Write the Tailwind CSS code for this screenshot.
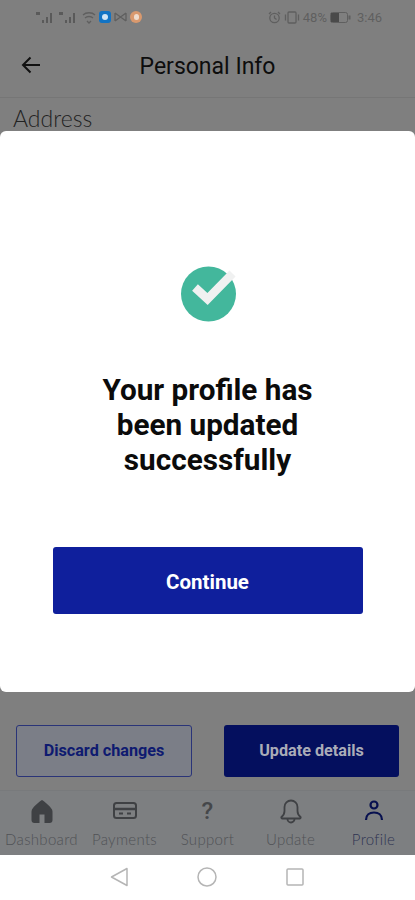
<!DOCTYPE html>
<html>
<head>
<meta charset="utf-8">
<script src="https://cdn.jsdelivr.net/npm/@tailwindcss/browser@4"></script>
</head>
<body class="m-0">
<div class="relative w-[415px] h-[900px] overflow-hidden flex flex-col bg-[#7f7f7f] font-['Roboto',sans-serif]">
  <!-- status bar -->
  <div class="h-[33px] pt-[1px] pl-[36px] pr-[33px] flex items-center justify-between text-[#5f5f5f] shrink-0">
    <div class="flex items-center gap-[3px]">
      <svg width="20" height="13" viewBox="0 0 20 13" fill="#5a5a5a"><rect x="0" y="1" width="4" height="3"/><rect x="6" y="9" width="2" height="3"/><rect x="10" y="6" width="2" height="6"/><rect x="14" y="2" width="2" height="10"/></svg>
      <svg width="20" height="13" viewBox="0 0 20 13" fill="#5a5a5a"><rect x="0" y="1" width="4" height="3"/><rect x="6" y="9" width="2" height="3"/><rect x="10" y="6" width="2" height="6"/><rect x="14" y="2" width="2" height="10"/></svg>
      <svg width="14" height="13" viewBox="0 0 14 13" fill="none" stroke="#5f5f5f" stroke-width="1.3"><path d="M1 4c3-3 9-3 12 0M3 7c2-2 6-2 8 0M5 10l2 2 2-2"/></svg>
      <div class="w-[12px] h-[12px] rounded-[3px] bg-[#1173c4] flex items-center justify-center"><div class="w-[6px] h-[6px] rounded-full bg-[#cfe4f5]"></div></div>
      <svg width="13" height="10" viewBox="0 0 13 10" fill="none" stroke="#5f5f5f" stroke-width="1.3"><path d="M1 1l11 8M12 1L1 9M1 1v8M12 1v8"/></svg>
      <div class="w-[12px] h-[12px] rounded-full bg-[#d9996e] flex items-center justify-center"><div class="w-[5px] h-[6px] rounded-full bg-[#efdccd]"></div></div>
    </div>
    <div class="flex items-center gap-[3px] text-[13px] leading-none">
      <svg width="13" height="13" viewBox="0 0 13 13" fill="none" stroke="#5f5f5f" stroke-width="1.3"><circle cx="6.5" cy="7" r="4.7"/><path d="M6.5 4.5V7l2 1.5M1 3l2-2M12 3l-2-2"/></svg>
      <svg width="16" height="13" viewBox="0 0 16 13" fill="none" stroke="#5f5f5f" stroke-width="1.3"><rect x="4" y="1" width="8" height="11" rx="1"/><path d="M1.5 3.5v6M14.5 3.5v6"/></svg>
      <span>48%</span>
      <svg width="21" height="11" viewBox="0 0 21 11"><rect x="0.5" y="0.5" width="17" height="10" rx="2" fill="none" stroke="#5f5f5f"/><rect x="1" y="1" width="8" height="9" fill="#4a4a4a"/><rect x="18.5" y="3.5" width="2" height="4" fill="#5f5f5f"/></svg>
      <span class="ml-[3px]">3:46</span>
    </div>
  </div>
  <!-- header -->
  <div class="relative h-[65px] pt-[2px] flex items-center justify-center border-b border-[#767676] shrink-0">
    <svg class="absolute left-[21px] top-[22px]" width="20" height="20" viewBox="0 0 20 20" fill="none" stroke="#111" stroke-width="2"><path d="M19 10H2M9.5 2.5L2 10l7.5 7.5"/></svg>
    <span class="text-[23px] font-normal text-[#0d0d0d] leading-none">Personal Info</span>
  </div>
  <div class="pl-[13px] pt-[7px] h-[625px] shrink-0 font-['Lato',sans-serif] font-light text-[23px] leading-[26px] text-[#222]">Address</div>

  <div class="flex-1"></div>

  <!-- bottom nav -->
  <div class="h-[65px] shrink-0 bg-[#7d7f81] border-t border-[#787a7c] grid grid-cols-5 font-['Lato',sans-serif] font-light text-[15px] leading-[18px] text-[#505256] tracking-[0.3px]">
    <div class="flex flex-col items-center pt-[8px]">
      <svg width="24" height="25" viewBox="0 0 24 25" fill="#3f4144"><path d="M12 1C9 3 4 7 2 10.500c-.5 1-.5 2-.5 3V21a3 3 0 003 3h15a3 3 0 003-3v-7.500c0-1 0-2-.5-3C20 7 15 3 12 1zM9.500 24v-8.500h5V24z" fill-rule="evenodd"/></svg>
      <span class="mt-[6px]">Dashboard</span>
    </div>
    <div class="flex flex-col items-center pt-[10px]">
      <svg width="24" height="20" viewBox="0 0 24 20" fill="none" stroke="#3f4144" stroke-width="2"><rect x="1" y="2" width="22" height="15" rx="2.500"/><path d="M1 8h22" stroke-width="2.500"/><path d="M6 12.500h4M14 12.500h4"/></svg>
      <span class="mt-[9px]">Payments</span>
    </div>
    <div class="flex flex-col items-center pt-[8px]">
      <span class="h-[24px] text-[24px] leading-[24px] font-['Roboto',sans-serif] font-medium text-[#45474a]">?</span>
      <span class="mt-[7px]">Support</span>
    </div>
    <div class="flex flex-col items-center pt-[8px]">
      <svg width="22" height="25" viewBox="0 0 22 25" fill="none" stroke="#3f4144" stroke-width="1.800"><path d="M1.500 18c2-1.500 3-3 3-6V8a6.500 6.500 0 0113 0v4c0 3 1 4.500 3 6 .5.500 0 1.500-.5 1.500h-18c-.5 0-1-1-.5-1.500z"/><path d="M7.500 20a3.500 3.500 0 007 0"/></svg>
      <span class="mt-[6px]">Update</span>
    </div>
    <div class="flex flex-col items-center pt-[8px] text-[#2f3452]">
      <svg width="20" height="25" viewBox="0 0 20 25" fill="none" stroke="#07104f" stroke-width="2.200"><circle cx="10" cy="6" r="3.500"/><path d="M2 21c0-5 3.500-7.500 8-7.500s8 2.500 8 7.500" /></svg>
      <span class="mt-[6px]">Profile</span>
    </div>
  </div>
  <!-- system nav -->
  <div class="h-[45px] shrink-0 bg-white flex items-center">
    <div class="w-full pl-[110px] flex items-center gap-[69px] pb-[1px]">
      <svg width="18" height="20" viewBox="0 0 18 20" fill="none" stroke="#b5b5b5" stroke-width="1.500"><path d="M17 1.500v17L1.500 10z" stroke-linejoin="round"/></svg>
      <svg width="20" height="20" viewBox="0 0 20 20" fill="none" stroke="#b5b5b5" stroke-width="1.500"><circle cx="10" cy="10" r="9"/></svg>
      <svg width="18" height="18" viewBox="0 0 18 18" fill="none" stroke="#b5b5b5" stroke-width="1.500"><rect x="1" y="1" width="16" height="16" rx="1"/></svg>
    </div>
  </div>

  <!-- footer buttons (over page content) -->
  <div class="absolute left-[16px] right-[16px] top-[725px] grid grid-cols-[176px_175px] gap-[32px] text-[16.200px] font-bold leading-none">
    <div class="h-[52px] pt-[1px] flex items-center justify-center rounded-[3px] border border-[#2a3478] bg-[#7b7e87] text-[#0e1a70]">Discard changes</div>
    <div class="h-[52px] pt-[1px] flex items-center justify-center rounded-[3px] bg-[#040f5e] text-[#aaacb8]">Update details</div>
  </div>

  <!-- dialog -->
  <div class="absolute left-0 right-0 top-[131px] h-[561px] bg-white rounded-[6px] flex flex-col items-center">
    <svg class="mt-[134px]" width="58" height="58" viewBox="0 0 58 58">
      <circle cx="29.500" cy="29" r="27.500" fill="#43b79c"/>
      <path d="M16 22.500L28.500 34l25-25.500" fill="none" stroke="#f0f1f1" stroke-width="8.500"/>
    </svg>
    <h1 class="mt-[49px] text-center text-[29.700px] leading-[35px] font-bold text-[#0b0b0b]">Your profile has<br>been updated<br>successfully</h1>
    <button class="mt-[70px] pt-[3px] w-[310px] h-[67px] rounded-[3px] bg-[#0f1f9c] text-white text-[20.500px] font-bold">Continue</button>
  </div>
</div>
</body>
</html>
